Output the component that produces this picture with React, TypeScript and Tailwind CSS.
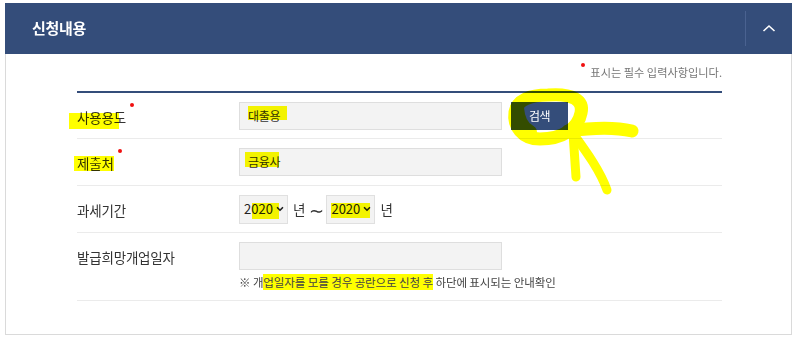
import { ChevronDown } from "lucide-react";

const font = { fontFamily: '"Noto Sans CJK KR", "Noto Sans", sans-serif' };

function Marker({ className }: { className: string }) {
  return <span className={`absolute bg-[#ffff00] mix-blend-multiply pointer-events-none ${className}`} />;
}

function Label({ text, required, mark }: { text: string; required?: boolean; mark: string }) {
  return (
    <div className="w-[162px] shrink-0">
      <span className="relative inline-block text-[13.5px] leading-[19px] tracking-[-0.2px] text-[#333]">
        {text}
        {required && <span className="absolute left-full ml-[4px] top-[-5px] w-[4px] h-[4px] rounded-full bg-[#f01010]" />}
        <Marker className={mark} />
      </span>
    </div>
  );
}

function Field({ value, mark }: { value?: string; mark?: string }) {
  return (
    <div className="relative w-[263px] h-[28px] bg-[#f3f3f3] border border-[#dedede] flex items-center pl-[8px] text-[12px] tracking-[-0.3px] text-[#333]">
      {value}
      {mark && <Marker className={mark} />}
    </div>
  );
}

function Year({ mark }: { mark: string }) {
  return (
    <div className="relative w-[49px] h-[29px] bg-[#f3f3f3] border border-[#e0e0e0] flex items-center pl-[4px] gap-[2px] text-[13px] text-[#222]">
      <span>2020</span>
      <ChevronDown size={10} strokeWidth={4} className="text-[#222]" />
      <Marker className={mark} />
    </div>
  );
}

export default function App() {
  return (
    <div className="relative w-[800px] h-[342px] bg-white pt-[3px] pl-[5px]" style={font}>
      <div className="w-[787px]">
        {/* header */}
        <div className="h-[51px] bg-[#344d7a] flex items-center">
          <div className="flex-1 pl-[27px] text-white font-bold text-[15px] tracking-[-0.3px]">신청내용</div>
          <div className="w-px h-[35px] bg-[#4a6290]" />
          <div className="w-[46px] flex justify-center">
            <svg width="14" height="9" viewBox="0 0 14 9">
              <path d="M1.5 7 L7 2 L12.5 7" fill="none" stroke="white" strokeWidth="1.6" />
            </svg>
          </div>
        </div>

        {/* body */}
        <div className="h-[281px] border-x border-b border-[#dadada] pl-[71px] pr-[69px]">
          <div className="h-[37px] flex items-center justify-end">
            <span className="relative text-[11.2px] text-[#777]">
              <span className="absolute -left-[9px] top-[-1px] w-[4px] h-[4px] rounded-full bg-[#f01010]" />
              표시는 필수 입력사항입니다.
            </span>
          </div>
          <div className="h-[2px] bg-[#344d7a]" />

          <div className="h-[46px] border-b border-[#ebebeb] flex items-center">
            <Label text="사용용도" required mark="-left-[8px] top-[5px] w-[50px] h-[16px]" />
            <Field value="대출용" mark="left-[8px] top-[3px] w-[39px] h-[14px]" />
            <button className="ml-[9px] w-[57px] h-[28px] bg-[#344d7a] text-white text-[12px] tracking-[-0.5px]">검색</button>
          </div>

          <div className="h-[47px] border-b border-[#ebebeb] flex items-center">
            <Label text="제출처" required mark="-left-[3px] top-[2px] w-[40px] h-[15px]" />
            <Field value="금융사" mark="left-[5px] top-[3px] w-[34px] h-[15px]" />
          </div>

          <div className="h-[47px] border-b border-[#ebebeb] flex items-center">
            <Label text="과세기간" mark="hidden" />
            <Year mark="left-[12px] top-[7px] w-[27px] h-[16px]" />
            <span className="ml-[5px] text-[13.5px] text-[#333]">년</span>
            <span className="ml-[4px] mr-[2px] text-[18px] leading-none text-[#333]">∼</span>
            <Year mark="left-[4px] top-[7px] w-[39px] h-[15px]" />
            <span className="ml-[5px] text-[13.5px] text-[#333]">년</span>
          </div>

          <div className="h-[68px] border-b border-[#ebebeb] flex items-start pt-[9px]">
            <div className="h-[28px] flex items-center">
              <Label text="발급희망개업일자" mark="hidden" />
            </div>
            <div className="flex flex-col">
              <Field />
              <div className="mt-[4px] text-[11.5px] leading-[16px] tracking-[-0.1px] text-[#444]">
                ※ 개<span className="bg-[#ffff00] mix-blend-multiply">업일자를 모를 경우 공란으로 신청 후</span> 하단에 표시되는 안내확인
              </div>
            </div>
          </div>
        </div>
      </div>

      {/* marker scribble */}
      <svg className="absolute left-0 top-0 pointer-events-none mix-blend-multiply" width="800" height="342">
        <g fill="none" stroke="#ffff00" strokeWidth="13" strokeLinecap="round" strokeLinejoin="round">
          <path d="M548 95 C572 93 584 100 581 113 C578 129 562 139 540 139 C522 139 513 126 515 112 C517 100 530 95 548 95 Z" />
          <path d="M517 108 C518 120 522 128 530 132" strokeWidth="14" />
          <path d="M568 131 C590 128 615 127 632 131" strokeWidth="13" />
          <path d="M573 133 L576 177" strokeWidth="9" />
          <path d="M572 132 C585 150 600 170 607 190" strokeWidth="9" />
        </g>
      </svg>
    </div>
  );
}
